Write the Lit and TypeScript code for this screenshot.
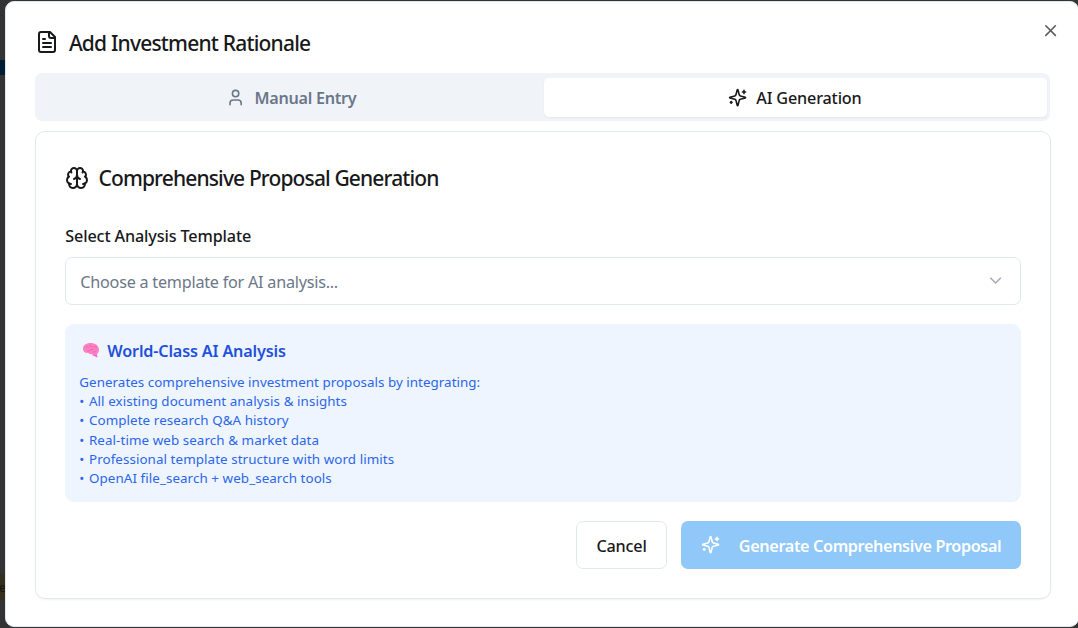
import { LitElement, html, css, svg } from "lit";
import { customElement, state } from "lit/decorators.js";

const icons = {
  file: svg`<path d="M15 2H6a2 2 0 0 0-2 2v16a2 2 0 0 0 2 2h12a2 2 0 0 0 2-2V7Z"/><path d="M14 2v4a2 2 0 0 0 2 2h4"/><path d="M10 9H8"/><path d="M16 13H8"/><path d="M16 17H8"/>`,
  user: svg`<path d="M19 21v-2a4 4 0 0 0-4-4H9a4 4 0 0 0-4 4v2"/><circle cx="12" cy="7" r="4"/>`,
  sparkles: svg`<path d="M9.937 15.5A2 2 0 0 0 8.5 14.063l-6.135-1.582a.5.5 0 0 1 0-.962L8.5 9.936A2 2 0 0 0 9.937 8.5l1.582-6.135a.5.5 0 0 1 .963 0L14.063 8.5A2 2 0 0 0 15.5 9.937l6.135 1.581a.5.5 0 0 1 0 .964L15.5 14.063a2 2 0 0 0-1.437 1.437l-1.582 6.135a.5.5 0 0 1-.963 0z"/><path d="M20 3v4"/><path d="M22 5h-4"/><path d="M4 17v2"/><path d="M5 18H3"/>`,
  brain: svg`<path d="M12 5a3 3 0 1 0-5.997.125 4 4 0 0 0-2.526 5.77 4 4 0 0 0 .556 6.588A4 4 0 1 0 12 18Z"/><path d="M12 5a3 3 0 1 1 5.997.125 4 4 0 0 1 2.526 5.77 4 4 0 0 1-.556 6.588A4 4 0 1 1 12 18Z"/><path d="M15 13a4.5 4.5 0 0 1-3-4 4.5 4.5 0 0 1-3 4"/><path d="M17.599 6.5a3 3 0 0 0 .399-1.375"/><path d="M6.003 5.125A3 3 0 0 0 6.401 6.5"/><path d="M3.477 10.896a4 4 0 0 1 .585-.396"/><path d="M19.938 10.5a4 4 0 0 1 .585.396"/><path d="M6 18a4 4 0 0 1-1.967-.516"/><path d="M19.967 17.484A4 4 0 0 1 18 18"/>`,
  close: svg`<path d="M18 6 6 18"/><path d="m6 6 12 12"/>`,
  chevron: svg`<path d="m6 9 6 6 6-6"/>`,
};

const icon = (name: keyof typeof icons, cls: string) =>
  html`<svg class="icon ${cls}" viewBox="0 0 24 24" aria-hidden="true">${icons[name]}</svg>`;

const features = [
  "All existing document analysis & insights",
  "Complete research Q&A history",
  "Real-time web search & market data",
  "Professional template structure with word limits",
  "OpenAI file_search + web_search tools",
];

@customElement("app-root")
export class AppRoot extends LitElement {
  @state() private tab = "ai";

  static styles = css`
    :host {
      display: block;
      position: relative;
      box-sizing: border-box;
      width: 1078px;
      height: 628px;
      padding: 1px 0 1px 5px;
      overflow: hidden;
      background: #333;
      color: #18191b;
      font-family: "Segoe UI", "Noto Sans", "Open Sans", sans-serif;
    }
    * { box-sizing: border-box; }
    .backdrop {
      position: absolute;
      inset: 0 auto 0 0;
      width: 6px;
      overflow: hidden;
    }
    .strip { position: absolute; left: 0; width: 6px; }
    .nav { top: 60px; height: 15px; background: #001d38; }
    .mark {
      top: 574px;
      height: 26px;
      background: #33301f;
      color: #17160f;
      font-size: 13px;
      line-height: 26px;
      text-indent: -1px;
    }
    .dialog {
      position: relative;
      display: flex;
      flex-direction: column;
      width: 1074px;
      height: 626px;
      padding: 28px 27px 27px 29.3px;
      background: #fff;
      border: 1px solid #e2e8f0;
      border-radius: 9px;
    }
    .icon {
      display: block;
      flex: none;
      width: 19.2px;
      height: 19.2px;
      fill: none;
      stroke: currentColor;
      stroke-width: 2;
      stroke-linecap: round;
      stroke-linejoin: round;
    }
    .lg { width: 24px; height: 24px; }
    button { font: inherit; color: inherit; margin: 0; }
    .close {
      position: absolute;
      top: 19px;
      right: 17.5px;
      padding: 0;
      border: 0;
      background: none;
      color: #5b5c5e;
    }
    .heading {
      display: flex;
      align-items: center;
      gap: 9.6px;
      margin: 0;
      height: 24px;
      font-size: 21px;
      font-weight: 500;
      line-height: 24px;
      letter-spacing: -0.8px;
      white-space: nowrap;
    }
    .heading.sub { letter-spacing: -0.86px; gap: 9.2px; }
    .heading span { padding-top: 2px; }
    .heading.sub span { padding: 0 0 1px; }
    .tabs {
      display: grid;
      grid-template-columns: 1fr 1fr;
      height: 48px;
      margin-top: 19px;
      margin-right: 0.7px;
      padding: 5px 3px 4px 5px;
      background: #f0f4f9;
      border-radius: 7px;
    }
    .tab {
      display: flex;
      align-items: center;
      justify-content: center;
      gap: 9.6px;
      padding: 0 2px 0 0;
      border: 0;
      border-radius: 5px;
      background: none;
      color: #6b7789;
      font-size: 16.2px;
      font-weight: 600;
      letter-spacing: -0.28px;
    }
    .btn span, .select span { padding-top: 2px; }
    .tab span { padding-top: 1px; }
    .tab.active {
      background: #fff;
      color: #18191b;
      font-weight: 500;
      letter-spacing: -0.17px;
      box-shadow: 0 1px 2px rgba(0, 0, 0, 0.05);
    }
    .card {
      display: flex;
      flex-direction: column;
      height: 468px;
      margin-top: 10px;
      padding: 34px 29px 28px;
      border: 1px solid #e2e8f0;
      border-radius: 10px;
      box-shadow: 0 1px 2px rgba(0, 0, 0, 0.05);
    }
    .label {
      margin-top: 34px;
      font-size: 16.2px;
      font-weight: 500;
      line-height: 24px;
      letter-spacing: -0.14px;
    }
    .select {
      display: flex;
      align-items: center;
      justify-content: space-between;
      height: 48px;
      margin-top: 9px;
      padding: 0 15px 0 14px;
      border: 1px solid #e2e8f0;
      border-radius: 7px;
      background: #fff;
      color: #6b7789;
      font-size: 16.2px;
      letter-spacing: -0.24px;
    }
    .select .icon { opacity: 0.6; margin-bottom: 1px; }
    .info {
      height: 178px;
      margin-top: 19px;
      padding: 14px 14px;
      border-radius: 9px;
      background: #eef5ff;
      color: #2b66ea;
    }
    .info-title {
      display: flex;
      align-items: center;
      gap: 7px;
      height: 24px;
      padding-left: 3px;
      color: #1f50dc;
      font-size: 16.2px;
      font-weight: 600;
      letter-spacing: -0.17px;
    }
    .info-title span { padding-top: 2px; }
    .emoji { width: 18px; height: 16px; flex: none; }
    .list {
      margin: 11px 0 0;
      padding: 0;
      list-style: none;
      font-size: 13.4px;
      line-height: 19.2px;
      letter-spacing: 0.03px;
      white-space: nowrap;
    }
    .item { letter-spacing: 0.07px; }
    .dot { margin-right: 1px; }
    .actions {
      display: flex;
      justify-content: flex-end;
      gap: 14px;
      margin-top: 19px;
    }
    .btn {
      display: flex;
      align-items: center;
      justify-content: center;
      height: 48px;
      padding: 0;
      border: 1px solid #e2e8f0;
      border-radius: 7px;
      background: #fff;
      font-size: 16.2px;
      font-weight: 500;
      letter-spacing: -0.18px;
      white-space: nowrap;
    }
    .cancel { width: 91px; }
    .primary {
      width: 340px;
      gap: 19px;
      border: 0;
      background: #90c8f9;
      color: #fff;
      font-weight: 600;
      letter-spacing: -0.36px;
    }
  `;

  render() {
    return html`
      <div class="backdrop">
        <div class="strip nav"></div>
        <div class="strip mark">e</div>
      </div>
      <section class="dialog" role="dialog">
        <h2 class="heading">${icon("file", "lg")}<span>Add Investment Rationale</span></h2>
        <button class="close" aria-label="Close">${icon("close", "")}</button>
        <div class="tabs">
          <button class="tab ${this.tab === "manual" ? "active" : ""}" @click=${() => (this.tab = "manual")}>
            ${icon("user", "")}<span>Manual Entry</span>
          </button>
          <button class="tab ${this.tab === "ai" ? "active" : ""}" @click=${() => (this.tab = "ai")}>
            ${icon("sparkles", "")}<span>AI Generation</span>
          </button>
        </div>
        <div class="card">
          <h3 class="heading sub">${icon("brain", "lg")}<span>Comprehensive Proposal Generation</span></h3>
          <div class="label">Select Analysis Template</div>
          <div class="select"><span>Choose a template for AI analysis...</span>${icon("chevron", "")}</div>
          <div class="info">
            <div class="info-title">
              <svg class="emoji" viewBox="0 0 18 16" aria-hidden="true">
                <path fill="#f565d0" d="M10 12.500 14.500 11.500l.9 2.700c.2.8-.5 1.300-1.300.8L10 13z"/>
                <path fill="#ff80c4" d="M1 7.200C.8 3.400 4 1 8.500 1c4.700 0 8.300 2.600 8.500 6.600.1 3-1.300 4.900-3.700 5.200-1.400.2-2.400-.1-3.300-.8-1.600.5-3.200.1-4-1.200C3.500 11.200 1.200 10 1 7.200z"/>
                <path fill="none" stroke="#e0609c" stroke-width=".8" stroke-linecap="round" d="M4 5c1-.8 2-.6 2.600.2M8 3c0 1.500 1 2 2 1.800M12 4.500c1.200-.3 2 .3 2.200 1.200M5.500 9c1.500.3 2.700-.3 3.200-1.500 1.300.5 2.500.2 3.200-.7M11 10c1.300.2 2.300-.2 3-1"/>
              </svg>
              <span>World-Class AI Analysis</span>
            </div>
            <ul class="list">
              <li>Generates comprehensive investment proposals by integrating:</li>
              ${features.map((f) => html`<li class="item"><span class="dot">•</span> ${f}</li>`)}
            </ul>
          </div>
          <div class="actions">
            <button class="btn cancel"><span>Cancel</span></button>
            <button class="btn primary">${icon("sparkles", "")}<span>Generate Comprehensive Proposal</span></button>
          </div>
        </div>
      </section>
    `;
  }
}
